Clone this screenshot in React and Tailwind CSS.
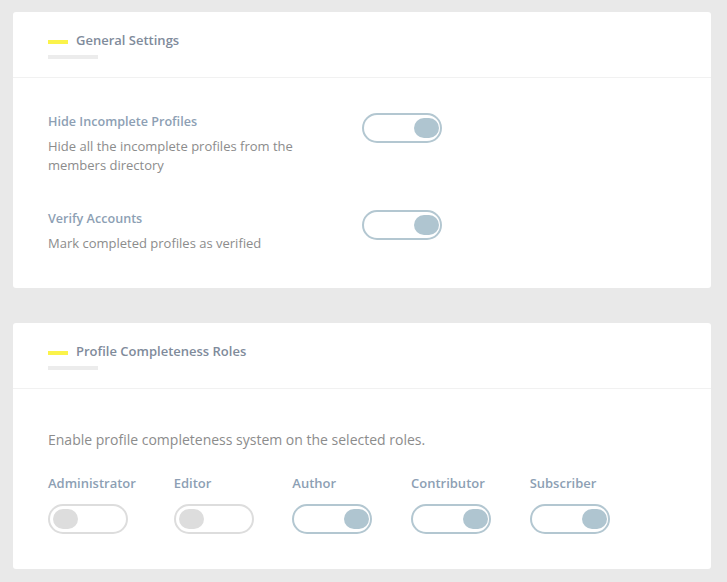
function Toggle({ on }) {
  return (
    <div
      className={`flex h-[30px] w-[80px] shrink-0 items-center rounded-full border-2 bg-white px-[1px] ${
        on ? "justify-end border-[#b3c7d1]" : "justify-start border-[#dddddd] pl-[3px]"
      }`}
    >
      <div className={`h-[20px] w-[25px] rounded-full ${on ? "bg-[#afc5d0]" : "bg-[#dddddd]"}`} />
    </div>
  );
}

function CardHeader({ title }) {
  return (
    <div className="border-b border-[#f1f1f1] px-[35px] pt-[19px] pb-[18px]">
      <div className="flex items-center gap-[8px]">
        <div className="mt-[3px] h-[4px] w-[20px] bg-[#fbf34a]" />
        <h2 className="text-[13px] font-semibold leading-[18px] text-[#7f8b9b]">{title}</h2>
      </div>
      <div className="mt-[6px] h-[4px] w-[50px] bg-[#ececec]" />
    </div>
  );
}

function SettingRow({ title, desc, on }) {
  return (
    <div className="flex items-start">
      <div className="w-[314px]">
        <div className="text-[12.6px] font-semibold leading-[18px] text-[#8d9fb4]">{title}</div>
        <p className="mt-[6px] max-w-[290px] text-[13px] leading-[19px] text-[#8c8c8c]">{desc}</p>
      </div>
      <div>
        <Toggle on={on} />
      </div>
    </div>
  );
}

const roles = [
  { name: "Administrator", on: false, w: "w-[87px]" },
  { name: "Editor", on: false, w: "w-[80px]" },
  { name: "Author", on: true, w: "w-[80px]" },
  { name: "Contributor", on: true, w: "w-[80px]" },
  { name: "Subscriber", on: true, w: "w-[80px]" },
];

export default function App() {
  return (
    <div
      className="min-h-[582px] bg-[#e9e9e9] pt-[12px] pl-[13px] pb-[13px]"
      style={{ fontFamily: '"Open Sans", "Noto Sans", sans-serif' }}
    >
      <div className="w-[698px] rounded-[3px] bg-white">
        <CardHeader title="General Settings" />
        <div className="flex flex-col gap-[35px] px-[35px] pt-[35px] pb-[35px]">
          <SettingRow
            title="Hide Incomplete Profiles"
            desc="Hide all the incomplete profiles from the members directory"
            on
          />
          <SettingRow title="Verify Accounts" desc="Mark completed profiles as verified" on />
        </div>
      </div>

      <div className="mt-[35px] w-[698px] rounded-[3px] bg-white">
        <CardHeader title="Profile Completeness Roles" />
        <div className="px-[35px] pt-[41px] pb-[35px]">
          <p className="text-[14px] leading-[19px] text-[#8c8c8c]">
            Enable profile completeness system on the selected roles.
          </p>
          <div className="mt-[25px] flex gap-[38.67px]">
            {roles.map((r) => (
              <div key={r.name} className={`flex ${r.w} shrink-0 flex-col`}>
                <div className="whitespace-nowrap text-[13px] font-semibold leading-[18px] text-[#8d9fb4]">
                  {r.name}
                </div>
                <div className="mt-[12px]">
                  <Toggle on={r.on} />
                </div>
              </div>
            ))}
          </div>
        </div>
      </div>
    </div>
  );
}
